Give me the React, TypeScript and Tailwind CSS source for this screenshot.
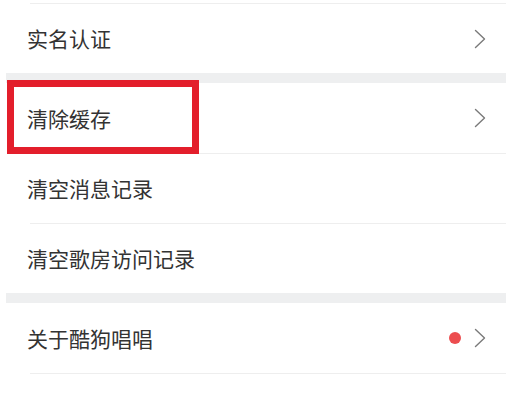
import React from "react";

const Chevron = () => (
  <svg width="12" height="20" viewBox="0 0 12 20" className="block">
    <path d="M1.5 1.5 L10.5 10 L1.5 18.5" fill="none" stroke="#7a7a7a" strokeWidth="1.4" strokeLinecap="round" strokeLinejoin="round" />
  </svg>
);

const Row = ({ label, h, dot, arrow }: { label: string; h: string; dot?: boolean; arrow?: boolean }) => (
  <div className={`flex items-center justify-between pl-[27px] pr-[20px] ${h}`}>
    <span className="text-[21px] leading-none text-[#333333]">{label}</span>
    <div className="flex items-center gap-[13px]">
      {dot && <span className="block w-[12px] h-[12px] rounded-full bg-[#ec4d4f]" />}
      {arrow && <Chevron />}
    </div>
  </div>
);

const Divider = () => <div className="ml-[30px] h-px bg-[#eeeeee]" />;
const Band = () => <div className="ml-[6px] h-[10px] bg-[#eeeff0]" />;

export default function App() {
  return (
    <div
      className="relative w-[506px] h-[398px] overflow-hidden bg-white"
      style={{ fontFamily: '"Noto Sans CJK SC", "Noto Sans", sans-serif' }}
    >
      <div className="h-[3px]" />
      <Divider />
      <Row label="实名认证" h="h-[69px]" arrow />
      <Band />
      <Row label="清除缓存" h="h-[70px]" arrow />
      <Divider />
      <Row label="清空消息记录" h="h-[69px]" />
      <Divider />
      <Row label="清空歌房访问记录" h="h-[69px]" />
      <Band />
      <Row label="关于酷狗唱唱" h="h-[70px]" dot arrow />
      <Divider />
      <Row label="用户协议" h="h-[69px]" arrow />
      <div className="absolute left-[7px] top-[80px] w-[192px] h-[74px] border-[7px] border-[#e31e2b]" />
    </div>
  );
}
